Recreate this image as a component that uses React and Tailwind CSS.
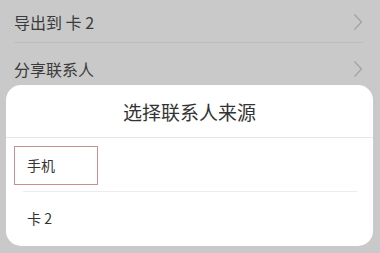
export default function App() {
  const font = { fontFamily: '"Noto Sans CJK SC", "Noto Sans", sans-serif' };
  const Chevron = () => (
    <svg width="10" height="18" viewBox="0 0 10 18" className="shrink-0">
      <polyline points="1.5,1.5 8.5,9 1.5,16.5" fill="none" stroke="#a3a3a3" strokeWidth="1.3" />
    </svg>
  );
  return (
    <div className="relative h-[253px] w-[380px] overflow-hidden bg-[#c9c9c9]" style={font}>
      <div className="flex flex-col pl-[14px] pr-[17px]">
        <div className="flex h-[43px] items-center justify-between border-b border-[#bdbdbd] pt-[1px]">
          <span className="text-[16px] text-[#3a3a3a]">导出到 卡 2</span>
          <Chevron />
        </div>
        <div className="flex h-[52px] items-center justify-between">
          <span className="text-[16px] text-[#3a3a3a]">分享联系人</span>
          <Chevron />
        </div>
      </div>
      <div className="absolute left-[6px] right-[7px] top-[85px] bottom-[7px] flex flex-col rounded-[15px] bg-white">
        <div className="flex h-[52px] items-center justify-center pt-[2px]">
          <span className="text-[19px] text-[#333]">选择联系人来源</span>
        </div>
        <div className="h-px bg-[#e6e6e6]" />
        <div className="flex flex-col">
          <div className="flex h-[53px] items-start pl-[8px] pt-[8px]">
            <div className="flex h-[39px] w-[84px] items-center border border-[#c98f90] pl-[12px]">
              <span className="text-[14px] text-[#333]">手机</span>
            </div>
          </div>
          <div className="ml-[17px] mr-[16px] h-px bg-[#ececec]" />
          <div className="flex h-[53px] items-center pl-[21px]">
            <span className="text-[14px] text-[#333]">卡 2</span>
          </div>
        </div>
      </div>
    </div>
  );
}
